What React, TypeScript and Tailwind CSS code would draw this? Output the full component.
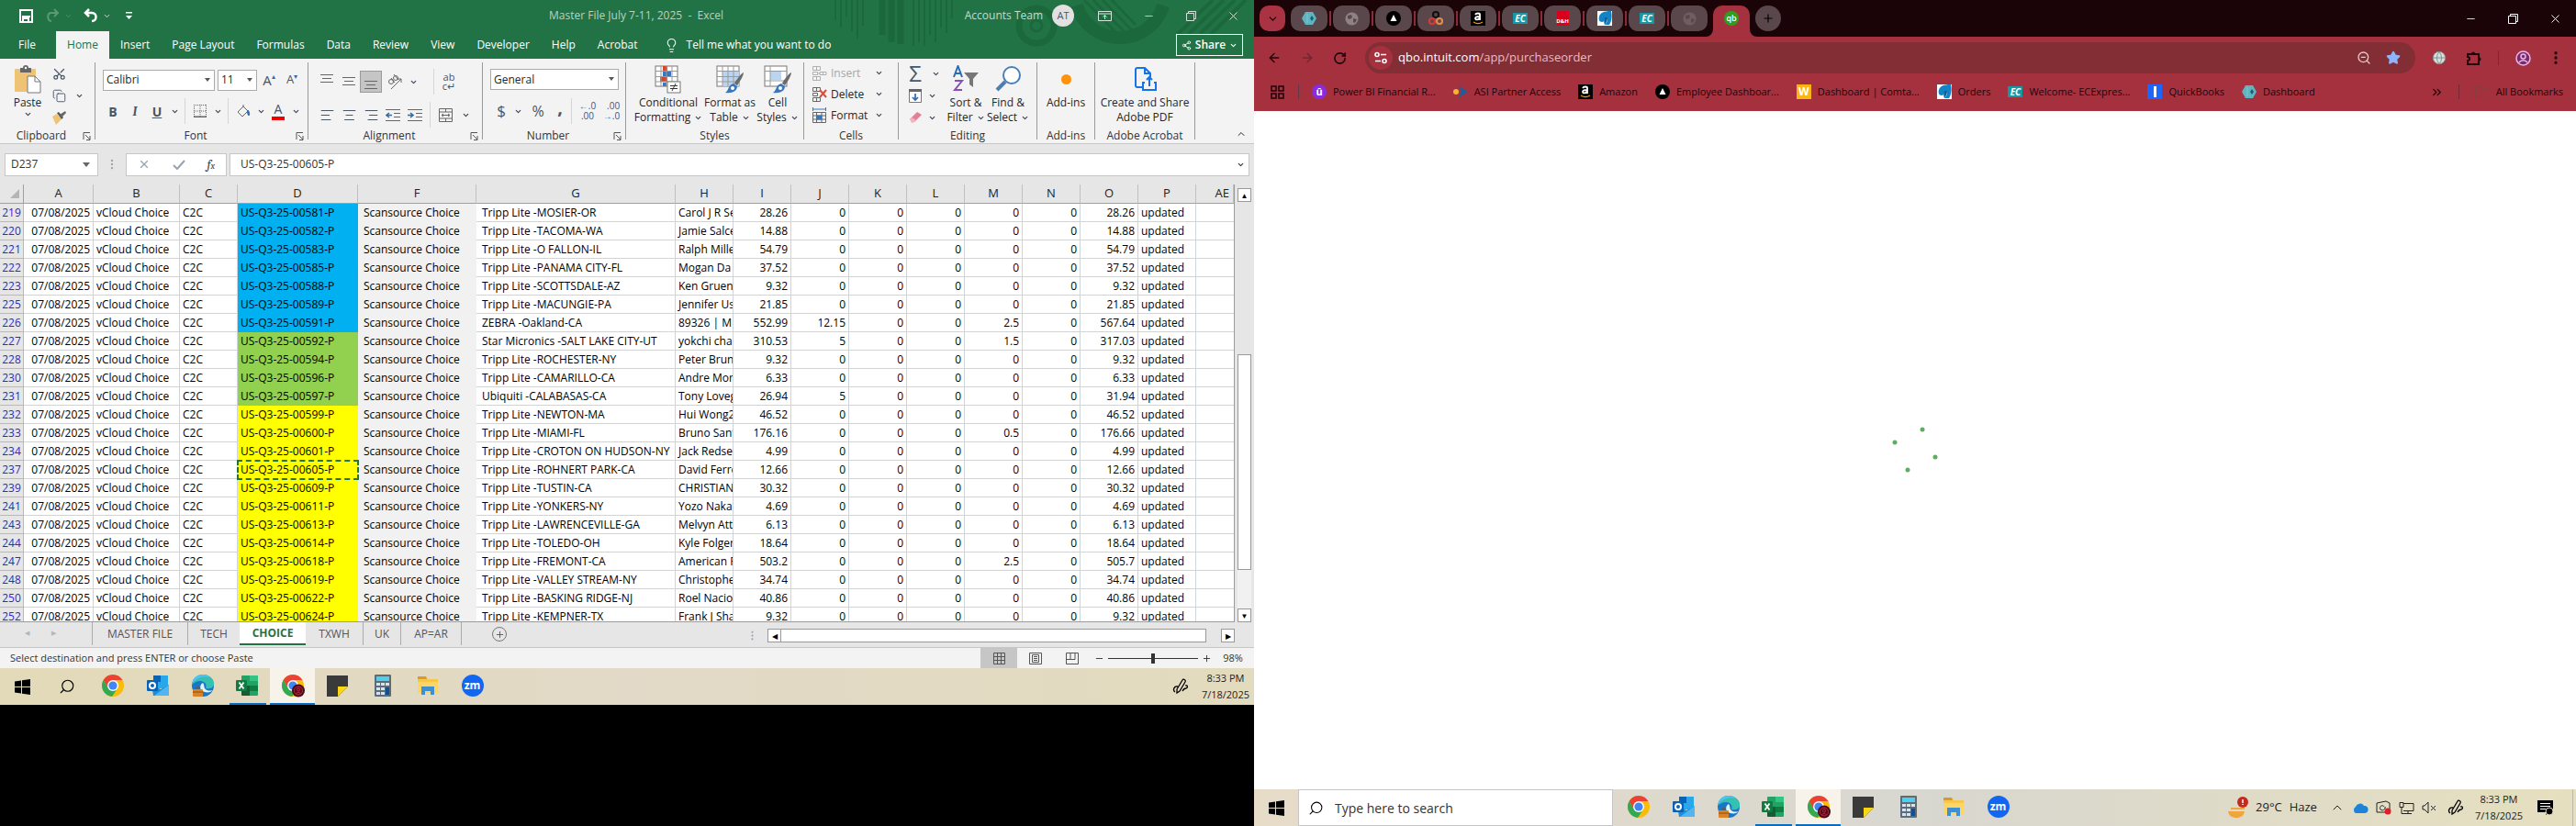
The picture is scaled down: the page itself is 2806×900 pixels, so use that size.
import React, { useState } from 'react';
import {
  AlignCenter, AlignLeft, AlignRight, ArrowLeft, ArrowRight, ChevronDown, ChevronUp, ChevronsRight,
  Copy, Folder, Globe, Lightbulb, Minus, MoreVertical, Plus, RotateCw, Scissors, Search, Share2, Star, X, ZoomOut,
} from 'lucide-react';

type Row = [number, string, string, string, string, string, string, string];

// row number, PO suffix, description, customer, freight, J, M, total
const rows: Row[] = [
  [219, '00581', 'Tripp Lite -MOSIER-OR', 'Carol J R Se', '28.26', '0', '0', '28.26'],
  [220, '00582', 'Tripp Lite -TACOMA-WA', 'Jamie Salce', '14.88', '0', '0', '14.88'],
  [221, '00583', 'Tripp Lite -O FALLON-IL', 'Ralph Mille', '54.79', '0', '0', '54.79'],
  [222, '00585', 'Tripp Lite -PANAMA CITY-FL', 'Mogan Da', '37.52', '0', '0', '37.52'],
  [223, '00588', 'Tripp Lite -SCOTTSDALE-AZ', 'Ken Gruen', '9.32', '0', '0', '9.32'],
  [225, '00589', 'Tripp Lite -MACUNGIE-PA', 'Jennifer Us', '21.85', '0', '0', '21.85'],
  [226, '00591', 'ZEBRA -Oakland-CA', '89326 | M', '552.99', '12.15', '2.5', '567.64'],
  [227, '00592', 'Star Micronics -SALT LAKE CITY-UT', 'yokchi cha', '310.53', '5', '1.5', '317.03'],
  [228, '00594', 'Tripp Lite -ROCHESTER-NY', 'Peter Brun', '9.32', '0', '0', '9.32'],
  [230, '00596', 'Tripp Lite -CAMARILLO-CA', 'Andre Mor', '6.33', '0', '0', '6.33'],
  [231, '00597', 'Ubiquiti -CALABASAS-CA', 'Tony Loveg', '26.94', '5', '0', '31.94'],
  [232, '00599', 'Tripp Lite -NEWTON-MA', 'Hui Wong2', '46.52', '0', '0', '46.52'],
  [233, '00600', 'Tripp Lite -MIAMI-FL', 'Bruno Sant', '176.16', '0', '0.5', '176.66'],
  [234, '00601', 'Tripp Lite -CROTON ON HUDSON-NY', 'Jack Redse', '4.99', '0', '0', '4.99'],
  [237, '00605', 'Tripp Lite -ROHNERT PARK-CA', 'David Ferre', '12.66', '0', '0', '12.66'],
  [239, '00609', 'Tripp Lite -TUSTIN-CA', 'CHRISTIAN', '30.32', '0', '0', '30.32'],
  [241, '00611', 'Tripp Lite -YONKERS-NY', 'Yozo Naka', '4.69', '0', '0', '4.69'],
  [243, '00613', 'Tripp Lite -LAWRENCEVILLE-GA', 'Melvyn Att', '6.13', '0', '0', '6.13'],
  [244, '00614', 'Tripp Lite -TOLEDO-OH', 'Kyle Folger', '18.64', '0', '0', '18.64'],
  [247, '00618', 'Tripp Lite -FREMONT-CA', 'American F', '503.2', '0', '2.5', '505.7'],
  [248, '00619', 'Tripp Lite -VALLEY STREAM-NY', 'Christophe', '34.74', '0', '0', '34.74'],
  [250, '00622', 'Tripp Lite -BASKING RIDGE-NJ', 'Roel Nacio', '40.86', '0', '0', '40.86'],
  [252, '00624', 'Tripp Lite -KEMPNER-TX', 'Frank J Sha', '9.32', '0', '0', '9.32'],
];

const poColor = (n: number) => (n <= 226 ? 'bg-[#00b0f0]' : n <= 231 ? 'bg-[#92d050]' : 'bg-[#ffff00]');

const Chev = () => <ChevronDown size={9} strokeWidth={3} className="shrink-0 text-gray-700" />;

const Tool: React.FC<{ label: string; w?: string; className?: string; children: React.ReactNode }> = ({ label, w = 'w-6', className = '', children }) => (
  <button aria-label={label} className={`flex h-6 shrink-0 items-center justify-center text-gray-600 ${w} ${className}`}>{children}</button>
);

const Launcher = () => (
  <svg width="9" height="9" viewBox="0 0 9 9" fill="none" stroke="#555">
    <path d="M1 8V.5H8M3 3l5 5M8 4v4.500H4" />
  </svg>
);

const Group: React.FC<{ name: string; w: string; launcher?: boolean; children: React.ReactNode }> = ({ name, w, launcher, children }) => (
  <div className={`flex shrink-0 ${w}`}>
    <div className="flex h-[88px] min-w-0 flex-1 flex-col">
      <div className="flex-1">{children}</div>
      <div className="flex h-4 items-center text-[#333]">
        <span className="flex-1 text-center whitespace-nowrap">{name}</span>
        {launcher && <button aria-label={`${name} settings`} className="mr-1"><Launcher /></button>}
      </div>
    </div>
    <div className="h-[84px] w-px bg-[#9a9a9a]" />
  </div>
);

const Sep = () => <div className="mx-1 h-7 w-px shrink-0 bg-[#d5d5d5]" />;

const Picker: React.FC<{ label: string; value: string; w: string }> = ({ label, value, w }) => (
  <div className={`relative h-[23px] border border-[#ababab] bg-white ${w}`}>
    <select aria-label={label} className="h-full w-full appearance-none bg-transparent px-[3px] leading-5 outline-none">
      <option>{value}</option>
    </select>
    <svg className="pointer-events-none absolute top-2 right-1" width="6" height="4"><path d="M0 0h6L3 4z" fill="#555" /></svg>
  </div>
);

const BigButton: React.FC<{ icon: React.ReactNode; lines: [string, string?]; chev?: boolean; w: string }> = ({ icon, lines, chev, w }) => (
  <button className={`flex flex-col items-center whitespace-nowrap ${w}`}>
    <span className="flex h-9 items-center">{icon}</span>
    <span className="leading-4">{lines[0]}</span>
    <span className="flex h-4 items-center gap-1 leading-4">{lines[1]}{chev && <Chev />}</span>
  </button>
);

const PasteIcon = () => (
  <svg width="30" height="31" viewBox="0 0 30 31">
    <rect x="1" y="4" width="23" height="25" rx="1" fill="#eec373" />
    <path d="M7 8V3h3a3 3 0 0 1 6 0h3v5z" fill="#666" />
    <circle cx="13" cy="3" r="1.200" fill="#fff" />
    <path d="M15 12h8l6 6v12H15z" fill="#fff" stroke="#777" />
    <path d="M23 12v6h6" fill="none" stroke="#777" />
  </svg>
);

const BrushIcon = () => (
  <svg width="17" height="16" viewBox="0 0 17 16">
    <path d="M1 7l5-3 5 6-6 6z" fill="#eec373" />
    <path d="M6 3l2-1 5 6-2 2z" fill="#555" />
    <path d="M9 5l6-4 1 2-5 5z" fill="#666" />
  </svg>
);

const GridIcon: React.FC<{ kind: 'cond' | 'table' | 'cell' }> = ({ kind }) => (
  <svg width="32" height="32" viewBox="0 0 32 32" fill="none">
    <rect x="2" y="2" width="24" height="22" fill="#fff" stroke="#777" />
    {kind === 'cond' && <>
      <path d="M10 2h5v5h-5zM7 14h8v5H7z" fill="#d0492f" />
      <path d="M10 7.500h9v6h-9zM10 20h4v4h-4z" fill="#3b76bb" />
    </>}
    {kind === 'table' && <path d="M8 8h18v16H8z" fill="#bcd4ee" />}
    {kind === 'cell' && <path d="M8 8h12v9H8z" fill="#bcd4ee" />}
    <path d={kind === 'cell' ? 'M2 7.500h24M2 18h24M8 2v22' : 'M2 7.500h24M2 13.500h24M2 19h24M8 2v22M14 2v22M20 2v22'} stroke="#999" />
    {kind === 'cond' ? <>
      <rect x="15" y="19" width="14" height="12" fill="#fff" stroke="#777" />
      <path d="M18 23.500h8M18 26.500h8M24 21l-4 8" stroke="#333" />
    </> : <>
      <path d="M31 9c-2 0-9 9-10 12l3 2c3-4 7-11 7-14z" fill="#6b6b6b" />
      <path d="M20 21l4 3c0 5-5 8-13 7 4-2 3-9 9-10z" fill="#3b76bb" />
      <circle cx="19" cy="26" r="2" fill="#fff" />
    </>}
  </svg>
);

const CellsIcon: React.FC<{ kind: string }> = ({ kind }) => (
  <svg width="17" height="18" viewBox="0 0 17 18" fill="none" stroke={kind === 'Insert' ? '#b0b0b0' : '#666'}>
    {kind === 'Format' ? <>
      <path d="M1.500 5.500h14v11h-14zM1.500 9h14M1.500 13h14M5.500 5v12M11 5v12" />
      <path d="M6 9h5v4H6z" fill="#3b76bb" stroke="#3b76bb" />
      <path d="M1.500 2h14M1.500 0v4M15.500 0v4" stroke="#3b76bb" />
    </> : <>
      <path d="M1.500 1.500h8v4h-8zM5.500 1.500v4M1.500 12.500h8v4h-8zM5.500 12.500v4M1.500 7.500h5v3h-5z" />
      {kind === 'Insert'
        ? <path d="M9 7.500h7v3H9zM12.500 7.500v3M6 9h3" />
        : <path d="M9 4l7 8M16 4l-7 8" stroke="#dd4b39" strokeWidth="2" />}
    </>}
  </svg>
);

const TitleArt = () => (
  <svg className="absolute top-0 right-0 h-16 w-[461px]" viewBox="0 0 461 64" fill="none" stroke="#1c683d">
    <path d="M5 0v22M11 0v30M17 0v18M23 0v34M29 0v42M35 0v28" strokeWidth="2" />
    <path d="M56 0v38M66 0v46M76 0v48" strokeWidth="7" />
    <path d="M90 0v50M96 0v46M102 0v50M108 0v38M114 0v46M120 0v30M126 0v36M132 0v20" strokeWidth="2" />
    <circle cx="224" cy="28" r="19" strokeWidth="7" />
    <circle cx="224" cy="28" r="6" strokeWidth="3" />
    <path d="M268 0a49 49 0 0 0 94 0" transform="translate(0 6)" strokeWidth="14" />
    <path d="M276 0l42 43M286 0l36 37M296 0l32 33M306 0l26 27" strokeWidth="3" />
    <path d="M416 0l-38 37M428 0l-38 37M440 0l-38 37M452 0l-38 37" strokeWidth="4" />
  </svg>
);

const WindowsLogo = () => (
  <svg width="17" height="17" viewBox="0 0 17 17" fill="#000">
    <path d="M0 2.500L7 1.500V8H0zM8 1.300L17 0v8H8zM0 9h7v6.500l-7-1zM8 9h9v8l-9-1.300z" />
  </svg>
);

const ChromeLogo: React.FC<{ badge?: boolean }> = ({ badge }) => (
  <svg width="26" height="26" viewBox="0 0 26 26">
    <circle cx="13" cy="13" r="12" fill="#fbbc05" />
    <path d="M2.600 7A12 12 0 0 1 23.400 7H13L8 16z" fill="#ea4335" />
    <path d="M2.600 7A12 12 0 0 0 12 25l6-9-10 0z" fill="#34a853" />
    <circle cx="13" cy="13" r="6" fill="#fff" />
    <circle cx="13" cy="13" r="4.600" fill="#4285f4" />
    {badge && <>
      <circle cx="19" cy="18.500" r="7" fill="#4a0a18" />
      <circle cx="19" cy="18.500" r="4.500" fill="none" stroke="#c02a45" />
      <circle cx="19" cy="17.500" r="1.600" fill="none" stroke="#c02a45" />
      <path d="M16.500 22c1-2 4-2 5 0" fill="none" stroke="#c02a45" />
    </>}
  </svg>
);

const OutlookLogo = () => (
  <svg width="26" height="24" viewBox="0 0 26 24">
    <rect x="8" y="1" width="16" height="14" fill="#28a8ea" />
    <rect x="8" y="1" width="8" height="7" fill="#0364b8" />
    <path d="M6 11l10 5 9-5v12H8z" fill="#1490df" />
    <path d="M25 11L9 23h16z" fill="#50b5f0" />
    <rect x="1" y="6" width="12" height="12" rx="1" fill="#0a62b8" />
    <circle cx="7" cy="12" r="3" fill="none" stroke="#fff" strokeWidth="2" />
  </svg>
);

const EdgeLogo = () => (
  <svg width="26" height="26" viewBox="0 0 26 26">
    <circle cx="13" cy="13" r="12" fill="#1877c9" />
    <path d="M1 12C2 4 8 1 13 1c8 0 13 6 12 11-1 4-5 5-9 4 2-4-1-8-6-8-4 0-7 2-9 4z" fill="#35c1b1" />
    <path d="M1 12C2 4 8 1 13 1c3 0 6 1 8 3-5-2-16-1-20 8z" fill="#4fc3f7" />
    <path d="M13 10c-4 2-4 9 2 10 4 1 7 0 9-2-3 1-7 1-9-2-1-2 0-3-2-6z" fill="#e8f3ee" />
    <rect x="2" y="17" width="11" height="8" rx="1" fill="#d98324" />
    <path d="M2 20h11M6 17v-2h3v2" stroke="#8a4a10" fill="none" />
  </svg>
);

const ExcelLogo = () => (
  <svg width="25" height="24" viewBox="0 0 25 24">
    <rect x="6" y="1" width="18" height="22" rx="1" fill="#21a366" />
    <path d="M15 1h8l1 1v5h-9z" fill="#33c481" />
    <path d="M6 12h9v11H7l-1-1z" fill="#185c37" />
    <path d="M15 12h9v6h-9z" fill="#107c41" />
    <rect x="0" y="6" width="12" height="12" rx="1" fill="#107c41" />
    <path d="M3.500 8.500l5 7M8.500 8.500l-5 7" stroke="#fff" strokeWidth="1.800" />
  </svg>
);

const NotesLogo = () => (
  <svg width="23" height="23" viewBox="0 0 23 23"><path d="M0 0h23v12L12 23H0z" fill="#3a3a3a" /><path d="M12 23V12h11z" fill="#f9d616" /></svg>
);

const CalcLogo = () => (
  <svg width="18" height="24" viewBox="0 0 18 24">
    <rect width="18" height="24" rx="1" fill="#5c6b7a" />
    <rect x="2" y="2" width="14" height="5" fill="#4fd0e8" />
    <path d="M2 9h4v3H2zM7 9h4v3H7zM2 14h4v3H2zM7 14h4v3H7zM2 19h4v3H2zM7 19h4v3H7zM12 9h4v3h-4z" fill="#d8e2ea" />
    <path d="M12 14h4v8h-4z" fill="#0f4f94" />
  </svg>
);

const FolderLogo = () => (
  <svg width="24" height="22" viewBox="0 0 24 22">
    <path d="M1 1h9l2 3h11v15H1z" fill="#f7c64a" />
    <path d="M1 1h9l1 3H1z" fill="#d9992b" />
    <path d="M1 7h22v12H1z" fill="#fbd667" />
    <path d="M5 21v-9h14v9h-4v-4H9v4z" fill="#3f8fd2" />
  </svg>
);

const ZoomLogo = () => (
  <span className="flex size-6 items-center justify-center rounded-full bg-[#1166f2] text-[12px] font-bold text-white">zm</span>
);

const apps = [
  { name: 'Chrome', icon: <ChromeLogo /> },
  { name: 'Outlook', icon: <OutlookLogo /> },
  { name: 'Edge', icon: <EdgeLogo /> },
  { name: 'Excel', icon: <ExcelLogo />, open: true },
  { name: 'Chrome profile', icon: <ChromeLogo badge />, open: true, active: true },
  { name: 'Sticky Notes', icon: <NotesLogo /> },
  { name: 'Calculator', icon: <CalcLogo /> },
  { name: 'File Explorer', icon: <FolderLogo /> },
  { name: 'Zoom', icon: <ZoomLogo /> },
];

const TaskApps = () => (
  <div className="flex h-full">
    {apps.map(a => (
      <button key={a.name} aria-label={a.name} className={`flex h-full w-[49px] flex-col items-center ${a.active ? 'bg-[#f7f3ea]' : ''}`}>
        <span className="flex flex-1 items-center">{a.icon}</span>
        <span className={`h-[2px] ${a.active ? 'w-full' : 'w-10'} ${a.open ? 'bg-[#0a6cbd]' : ''}`} />
      </button>
    ))}
  </div>
);

const PenIcon = () => (
  <svg width="18" height="18" viewBox="0 0 18 18" fill="none" stroke="#000" strokeWidth="1.300">
    <path d="M5 12L11 2c1-2 4 0 3 2L8 14l-3 2zM6 9c-4-1-6 4-3 6M14 8c3-1 3 2 1 3-2 0-3 1-4 3" />
  </svg>
);

const Clock = () => (
  <div className="flex flex-col items-center text-[11px] leading-[18px] text-[#222]">
    <span>8:33 PM</span>
    <span>7/18/2025</span>
  </div>
);

const menuTabs = ['Insert', 'Page Layout', 'Formulas', 'Data', 'Review', 'View', 'Developer', 'Help', 'Acrobat'];

const TitleBar = () => (
  <header className="relative h-16 bg-[#217346] text-white">
    <TitleArt />
    <div className="relative flex h-[34px] items-center whitespace-nowrap">
      <div className="flex flex-1 items-center gap-2 pl-5">
        <button aria-label="Save">
          <svg width="17" height="17" viewBox="0 0 17 17" fill="none" stroke="#fff" strokeWidth="2"><path d="M2 2h13v13H2zM4 9h9M5 15v-4h6v4" /></svg>
        </button>
        <button aria-label="Redo" className="ml-1 flex items-center gap-1 text-[#5c9a76]">
          <svg width="17" height="16" viewBox="0 0 17 16" fill="none" stroke="currentColor" strokeWidth="2"><path d="M10 1l4 4-4 4M14 5H7c-5 0-5 8 0 9" /></svg>
          <ChevronDown size={9} />
        </button>
        <button aria-label="Undo" className="ml-1 flex items-center gap-1">
          <svg width="17" height="16" viewBox="0 0 17 16" fill="none" stroke="currentColor" strokeWidth="2.500"><path d="M6 1L2 5l4 4M2 5h7c6 0 6 9 0 9" /></svg>
          <ChevronDown size={9} />
        </button>
        <button aria-label="Customize quick access" className="ml-2">
          <svg width="7" height="8" viewBox="0 0 7 8" fill="#fff"><path d="M0 0h7v1.500H0zM0 4h7L3.500 8z" /></svg>
        </button>
      </div>
      <h1 className="text-center text-[12px] text-[#b5d3c0]">Master File July 7-11, 2025 &nbsp;-&nbsp; Excel</h1>
      <div className="flex flex-1 items-center justify-end text-[#d3e5da]">
        <span className="text-[12px] text-[#c3dccd]">Accounts Team</span>
        <span className="mr-[14px] ml-[10px] flex size-6 items-center justify-center rounded-full bg-[#e4dfe0] text-[11px] text-gray-600">AT</span>
        <button aria-label="Ribbon display options" className="flex w-11 pl-3">
          <svg width="15" height="11" viewBox="0 0 15 11" fill="none" stroke="currentColor"><path d="M.5.500h14v10H.500zM.500 3h14M7.500 9V5M5.500 6.500l2-2 2 2" /></svg>
        </button>
        <button aria-label="Minimize" className="flex w-[46px] justify-center"><Minus size={13} strokeWidth={1.500} /></button>
        <button aria-label="Restore" className="flex w-[46px] justify-center"><Restore /></button>
        <button aria-label="Close" className="flex w-[46px] justify-center"><X size={15} strokeWidth={1.500} /></button>
      </div>
    </div>
    <nav className="relative flex h-[30px] items-center text-[12px]">
      <button className="h-full w-[61px] pr-3 pl-5 text-left">File</button>
      <button className="h-full w-[58px] bg-[#f3f3f3] text-[#217346]">Home</button>
      {menuTabs.map(t => <button key={t} className="h-full px-3 whitespace-nowrap">{t}</button>)}
      <button className="ml-4 flex items-center gap-2 whitespace-nowrap"><Lightbulb size={17} strokeWidth={1.500} />Tell me what you want to do</button>
      <button className="mr-3 ml-auto flex h-6 w-[73px] items-center justify-center gap-1 border border-white font-semibold"><Share2 size={11} />Share<ChevronDown size={9} strokeWidth={3} /></button>
    </nav>
  </header>
);

const Restore = () => (
  <svg width="11" height="11" viewBox="0 0 11 11" fill="none" stroke="currentColor"><path d="M.5 2.500h8v8h-8zM2.500 2.500v-2h8v8h-2" /></svg>
);

const Indent: React.FC<{ out?: boolean }> = ({ out }) => (
  <svg width="16" height="13" viewBox="0 0 16 13" fill="none" stroke="#666">
    <path d="M0 .500h16M9 4.500h7M9 8.500h7M0 12.500h16" />
    <path d={out ? 'M7 6.500H1M4 4L1 6.500 4 9' : 'M0 6.500h6M3 4l3 2.500L3 9'} stroke="#2b6cb5" strokeWidth="1.600" />
  </svg>
);

const VAlign: React.FC<{ y: number }> = ({ y }) => (
  <svg width="14" height="18" viewBox="0 0 14 18" stroke="#666"><path d={`M0 ${y}.500h14M2 ${y + 4}.500h10M0 ${y + 8}.500h14`} /></svg>
);

const Ribbon = () => (
  <div className="flex h-[93px] border-b border-[#c8c8c8] bg-[#f3f3f3] pt-1 text-[12px] text-[#262626]">
    <Group name="Clipboard" w="w-[104px]" launcher>
      <div className="flex">
        <button className="ml-3 flex w-9 flex-col items-center">
          <span className="flex h-9 items-center"><PasteIcon /></span>
          <span className="leading-4">Paste</span>
          <Chev />
        </button>
        <div className="ml-1 flex flex-col">
          <Tool label="Cut"><Scissors size={15} className="-rotate-90" /></Tool>
          <div className="flex"><Tool label="Copy"><Copy size={15} strokeWidth={1.500} /></Tool><Tool label="Copy options" w="w-5"><Chev /></Tool></div>
          <Tool label="Format painter"><BrushIcon /></Tool>
        </div>
      </div>
    </Group>

    <Group name="Font" w="w-[232px]" launcher>
      <div className="flex items-center pt-[7px] pl-2">
        <Picker label="Font" value="Calibri" w="mr-[3px] w-[122px]" />
        <Picker label="Font size" value="11" w="w-[43px]" />
        <Tool label="Grow font" w="w-[26px]"><span className="text-[15px]">A</span><span className="mb-2 text-[8px] text-[#2b6cb5]">▴</span></Tool>
        <Tool label="Shrink font" w="w-6"><span className="text-[13px]">A</span><span className="mb-2 text-[8px] text-[#2b6cb5]">▾</span></Tool>
      </div>
      <div className="mt-2 flex items-center pl-[7px] text-[14px]">
        <Tool label="Bold" className="font-bold">B</Tool>
        <Tool label="Italic" className="font-serif font-bold italic">I</Tool>
        <Tool label="Underline" className="font-bold underline">U</Tool>
        <Tool label="Underline options" w="w-[14px]"><Chev /></Tool>
        <Sep />
        <Tool label="Borders">
          <svg width="14" height="14" viewBox="0 0 14 14" fill="none" stroke="#666"><path d="M.5 0v13M7 0v13M13.500 0v13M0 .500h14M0 7h14" strokeDasharray="1 1" /><path d="M0 13.500h14" strokeWidth="2" /></svg>
        </Tool>
        <Tool label="Border options" w="w-[14px]"><Chev /></Tool>
        <Sep />
        <Tool label="Fill color">
          <svg width="16" height="15" viewBox="0 0 16 15" fill="none" stroke="#666"><path d="M2 8l6-6 5 5-6 6zM8 2V0" /><path d="M13 6c2 2 2 5 1 6-1-1-2-3-1-6z" fill="#2b6cb5" stroke="#2b6cb5" /></svg>
        </Tool>
        <Tool label="Fill options" w="w-[14px]"><Chev /></Tool>
        <Tool label="Font color"><span className="border-b-4 border-[#e00] px-[3px] leading-4">A</span></Tool>
        <Tool label="Font color options" w="w-[14px]"><Chev /></Tool>
      </div>
    </Group>

    <Group name="Alignment" w="w-[190px]" launcher>
      <div className="flex items-center pt-[7px] pl-2">
        <Tool label="Top align"><VAlign y={1} /></Tool>
        <Tool label="Middle align"><VAlign y={4} /></Tool>
        <Tool label="Bottom align" className="border border-[#9a9a9a] bg-[#c5c5c5]"><VAlign y={8} /></Tool>
        <Tool label="Orientation" w="w-7">
          <svg width="17" height="17" viewBox="0 0 17 17" fill="none" stroke="#666"><path d="M4 16L15 5M15 9V5h-4" /><circle cx="4" cy="8" r="2.500" /><circle cx="9" cy="4" r="2.500" /><path d="M4 4l4 5M7 0l5 6" /></svg>
        </Tool>
        <Tool label="Orientation options" w="w-3"><Chev /></Tool>
        <div className="ml-3"><Sep /></div>
        <Tool label="Wrap text"><span className="text-[11px] leading-[10px]">ab<br />c↵</span></Tool>
      </div>
      <div className="mt-2 flex items-center pl-2">
        <Tool label="Align left"><AlignLeft size={17} strokeWidth={1.500} /></Tool>
        <Tool label="Center"><AlignCenter size={17} strokeWidth={1.500} /></Tool>
        <Tool label="Align right"><AlignRight size={17} strokeWidth={1.500} /></Tool>
        <Tool label="Decrease indent"><Indent out /></Tool>
        <Tool label="Increase indent"><Indent /></Tool>
        <Sep />
        <Tool label="Merge and center">
          <svg width="15" height="15" viewBox="0 0 15 15" fill="none" stroke="#666"><path d="M.5.500h14v14H.500zM.500 4h14M.500 11h14M7.500.500V4M7.500 11v3.500M3 7.500h9M5 6L3 7.500 5 9M10 6l2 1.500L10 9" /></svg>
        </Tool>
        <Tool label="Merge options" w="w-5"><Chev /></Tool>
      </div>
    </Group>

    <Group name="Number" w="w-[156px]" launcher>
      <div className="flex pt-[7px] pl-2"><Picker label="Number format" value="General" w="w-[140px]" /></div>
      <div className="mt-[9px] flex items-center pl-2">
        <Tool label="Accounting format" className="text-[17px]">$</Tool>
        <Tool label="Accounting options" w="w-3"><Chev /></Tool>
        <Tool label="Percent" w="w-8" className="text-[16px]">%</Tool>
        <Tool label="Comma" w="w-4" className="pb-2 text-[20px] font-bold">,</Tool>
        <Sep />
        <Tool label="Increase decimal" w="w-[26px]" className="text-[10px]"><span className="leading-[11px] whitespace-nowrap"><span className="font-bold text-[#2b6cb5]">←</span>.0<br />.00</span></Tool>
        <Tool label="Decrease decimal" w="w-[26px]" className="text-[10px]"><span className="text-right leading-[11px] whitespace-nowrap">.00<br /><span className="font-bold text-[#2b6cb5]">→</span>.0</span></Tool>
      </div>
    </Group>

    <Group name="Styles" w="w-[194px]">
      <div className="flex pl-2">
        <BigButton icon={<GridIcon kind="cond" />} lines={['Conditional', 'Formatting']} chev w="w-[76px]" />
        <BigButton icon={<GridIcon kind="table" />} lines={['Format as', 'Table']} chev w="w-[58px]" />
        <BigButton icon={<GridIcon kind="cell" />} lines={['Cell', 'Styles']} chev w="w-[46px]" />
      </div>
    </Group>

    <Group name="Cells" w="w-[103px]">
      {['Insert', 'Delete', 'Format'].map(k => (
        <button key={k} className={`ml-2 flex h-[23px] items-center gap-1 ${k === 'Insert' ? 'text-[#a6a6a6]' : ''}`}>
          <CellsIcon kind={k} /><span className="w-11 text-left">{k}</span><Chev />
        </button>
      ))}
    </Group>

    <Group name="Editing" w="w-[151px]">
      <div className="flex">
        <div className="flex w-[50px] flex-col pl-[6px]">
          <div className="flex"><Tool label="AutoSum" className="text-[24px]">Σ</Tool><Tool label="AutoSum options" w="w-5"><Chev /></Tool></div>
          <div className="flex">
            <Tool label="Fill"><svg width="14" height="15" viewBox="0 0 14 15" fill="none"><path d="M.5.500h13v14H.500z" fill="#fff" stroke="#777" /><path d="M0 0h14v3H0z" fill="#666" /><path d="M7 5v7M4 9l3 3 3-3" stroke="#2b6cb5" strokeWidth="1.700" /></svg></Tool>
            <Tool label="Fill options" w="w-3"><Chev /></Tool>
          </div>
          <div className="flex">
            <Tool label="Clear"><svg width="14" height="12" viewBox="0 0 14 12"><path d="M1 8l8-8 5 3-8 8z" fill="#e57f97" /><path d="M1 8l2-2 5 3-2 2-3 1z" fill="#f3b2c0" /></svg></Tool>
            <Tool label="Clear options" w="w-3"><Chev /></Tool>
          </div>
        </div>
        <BigButton
          icon={<svg width="30" height="30" viewBox="0 0 30 30" fill="none"><path d="M2 13L6.500 1 11 13M3.500 9h6" stroke="#2b6cb5" strokeWidth="2" /><path d="M3 17h8L3 27h8" stroke="#8a4fb5" strokeWidth="2" /><path d="M13 8h16l-6 7v9l-4-3v-6z" fill="#777" /></svg>}
          lines={['Sort &', 'Filter']} chev w="w-[46px]"
        />
        <BigButton
          icon={<svg width="30" height="30" viewBox="0 0 30 30" fill="none"><circle cx="19" cy="11" r="9" fill="#fff" stroke="#4a7fb5" strokeWidth="2" /><path d="M12 18L3 27" stroke="#4a7fb5" strokeWidth="4" /></svg>}
          lines={['Find &', 'Select']} chev w="w-[46px]"
        />
      </div>
    </Group>

    <Group name="Add-ins" w="w-[63px]">
      <BigButton icon={<span className="size-[11px] rounded-full bg-[#ff930f]" />} lines={['Add-ins']} w="w-full" />
    </Group>

    <Group name="Adobe Acrobat" w="w-[109px]">
      <BigButton
        icon={<svg width="25" height="28" viewBox="0 0 25 28" fill="none" stroke="#1473e6" strokeWidth="2"><path d="M9 23H4a2 2 0 0 1-2-2V4a2 2 0 0 1 2-2h8l6 6v4M12 2v6h6M12 18h-2v8h14v-8h-2M17 22v-9M14 15l3-3 3 3" /></svg>}
        lines={['Create and Share', 'Adobe PDF']} w="w-full"
      />
    </Group>
    <button aria-label="Collapse ribbon" className="mr-2 mb-1 ml-auto self-end"><ChevronUp size={12} /></button>
  </div>
);

const FormulaBar = () => {
  const [value, setValue] = useState('US-Q3-25-00605-P');
  return (
    <div className="flex h-11 items-center bg-[#e6e6e6] px-[5px] text-[12px] text-[#333]">
      <div className="flex h-[25px] w-[102px] items-center border border-[#c6c6c6] bg-white">
        <input aria-label="Name box" defaultValue="D237" className="w-full min-w-0 bg-transparent px-[6px] outline-none" />
        <svg width="16" height="5" className="mr-1 shrink-0"><path d="M4 0h8L8 5z" fill="#666" /></svg>
      </div>
      <div className="flex w-[30px] justify-center"><MoreVertical size={14} className="text-gray-400" /></div>
      <div className="flex h-[25px] w-[110px] items-center justify-around border border-[#c6c6c6] bg-white text-gray-400">
        <button aria-label="Cancel"><X size={14} /></button>
        <button aria-label="Enter"><svg width="14" height="11" viewBox="0 0 14 11" fill="none" stroke="currentColor" strokeWidth="2"><path d="M1 6l4 4 8-9" /></svg></button>
        <button className="font-serif text-[14px] text-gray-700 italic">f<span className="text-[10px]">x</span></button>
      </div>
      <div className="ml-[3px] flex h-[25px] flex-1 items-center border border-[#c6c6c6] bg-white">
        <input aria-label="Formula" value={value} onChange={e => setValue(e.target.value)} className="flex-1 bg-transparent px-[11px] outline-none" />
        <button aria-label="Expand formula bar" className="mr-1"><ChevronDown size={9} strokeWidth={3} /></button>
      </div>
    </div>
  );
};

const cols = [
  ['A', 'w-[76px]'], ['B', 'w-[94px]'], ['C', 'w-[63px]'], ['D', 'w-[131px]'], ['F', 'w-[129px]'], ['G', ''],
  ['H', 'w-[63px]'], ['I', 'w-[63px]'], ['J', 'w-[63px]'], ['K', 'w-[63px]'], ['L', 'w-[63px]'], ['M', 'w-[63px]'],
  ['N', 'w-[63px]'], ['O', 'w-[63px]'], ['P', 'w-[63px]'], ['AE', 'w-[41px]'],
];

const cell = 'h-5 border-r border-b border-[#cfd3da] px-[3px] py-0 leading-[19px] whitespace-nowrap';

const Sheet = () => (
  <div className="flex h-[477px] bg-[#e6e6e6]">
    <div className="min-w-0 flex-1 overflow-hidden border-r border-b border-[#9b9b9b]">
      <table className="w-full table-fixed border-separate border-spacing-0 bg-white text-[12px] text-black">
        <thead>
          <tr className="bg-[#e6e6e6] text-[13px] text-[#222]">
            <th className="h-[21px] w-[26px] border-r border-b border-[#a0a0a0] p-0">
              <svg width="10" height="10" className="mr-1 ml-auto"><path d="M10 0v10H0z" fill="#b5b5b5" /></svg>
            </th>
            {cols.map(([c, w]) => (
              <th key={c} className={`h-[21px] border-r border-b border-r-[#c0c0c0] border-b-[#a0a0a0] p-0 font-normal ${w} ${c === 'AE' ? 'pr-1 text-right' : ''}`}>{c}</th>
            ))}
          </tr>
        </thead>
        <tbody>
          {rows.map(([n, po, desc, who, freight, j, m, total]) => (
            <tr key={n}>
              <th className="h-5 border-r border-b border-[#b9b9b9] bg-[#e6e6e6] p-0 text-center font-normal text-[#2b27d6]">{n}</th>
              <td className={`${cell} text-right`}>07/08/2025</td>
              <td className={cell}>vCloud Choice</td>
              <td className={cell}>C2C</td>
              <td className={`h-5 px-[3px] py-0 leading-[18px] whitespace-nowrap ${poColor(n)} ${n === 237 ? 'outline-2 -outline-offset-1 outline-dashed outline-[#217346]' : ''}`}>US-Q3-25-{po}-P</td>
              <td className="h-5 bg-[#f1f1f1] px-[6px] py-0 whitespace-nowrap">Scansource Choice</td>
              <td className={`${cell} pl-[6px]`}>{desc}</td>
              <td className={`${cell} overflow-hidden`}>{who}</td>
              <td className={`${cell} text-right`}>{freight}</td>
              <td className={`${cell} text-right`}>{j}</td>
              <td className={`${cell} text-right`}>0</td>
              <td className={`${cell} text-right`}>0</td>
              <td className={`${cell} text-right`}>{m}</td>
              <td className={`${cell} text-right`}>0</td>
              <td className={`${cell} text-right`}>{total}</td>
              <td className={cell}>updated</td>
              <td className="h-5 border-b border-[#cfd3da] p-0" />
            </tr>
          ))}
        </tbody>
      </table>
    </div>
    <div className="flex w-[21px] flex-col items-center pt-1">
      <button aria-label="Scroll up" className="flex h-[15px] w-[15px] items-center justify-center border border-[#999] bg-white text-[8px]">▲</button>
      <div className="h-[166px]" />
      <div className="h-[235px] w-[15px] border border-[#999] bg-white" />
      <div className="w-[15px] flex-1 bg-[#f1f1f1]" />
      <button aria-label="Scroll down" className="flex h-[15px] w-[15px] items-center justify-center border border-[#999] bg-white text-[8px]">▼</button>
    </div>
  </div>
);

const SheetTabs = () => (
  <div className="flex h-7 items-start border-b border-[#c6c6c6] bg-[#e6e6e6] text-[12px] text-[#555]">
    <div className="flex h-[25px] w-[101px] items-center gap-6 border-r border-[#ababab] pl-[27px] text-[7px] text-[#b5b5b5]"><span>◀</span><span>▶</span></div>
    <button className="h-[25px] w-[104px] border-r border-[#ababab]">MASTER FILE</button>
    <button className="h-[25px] w-14">TECH</button>
    <button className="h-[25px] w-[72px] border-b-2 border-[#217346] bg-white font-bold text-[#217346]">CHOICE</button>
    <button className="h-[25px] w-[63px] border-r border-[#ababab]">TXWH</button>
    <button className="h-[25px] w-[41px] border-r border-[#ababab]">UK</button>
    <button className="h-[25px] w-[66px] border-r border-[#ababab]">AP=AR</button>
    <button aria-label="New sheet" className="mt-[5px] ml-[33px] flex size-4 items-center justify-center rounded-full border border-[#777]"><Plus size={11} /></button>
    <div className="mt-[7px] ml-auto flex h-[15px] items-center">
      <MoreVertical size={13} className="mr-[10px] text-gray-400" />
      <button aria-label="Scroll left" className="flex size-[15px] items-center justify-center border border-[#999] bg-white text-[8px] text-black">◀</button>
      <div className="h-[15px] w-[463px] border border-l-0 border-[#999] bg-white" />
      <button aria-label="Scroll right" className="mr-[21px] ml-4 flex size-[15px] items-center justify-center border border-[#999] bg-white text-[8px] text-black">▶</button>
    </div>
  </div>
);

const StatusBar = () => (
  <div className="flex h-[22px] items-center bg-[#f3f3f3] pl-[11px] text-[11px] text-[#333]">
    <span className="flex-1">Select destination and press ENTER or choose Paste</span>
    <button aria-label="Normal view" className="flex h-full w-10 items-center justify-center bg-[#c6c6c6]">
      <svg width="13" height="13" viewBox="0 0 13 13" fill="none" stroke="#555"><path d="M.5.500h12v12H.500zM.500 4.500h12M.500 8.500h12M4.500.500v12M8.500.500v12" /></svg>
    </button>
    <button aria-label="Page layout view" className="flex w-10 justify-center">
      <svg width="14" height="13" viewBox="0 0 14 13" fill="none" stroke="#555"><path d="M.5.500h13v12H.500zM3.500 2.500h7v8h-7zM5 4.500h4M5 6.500h4M5 8.500h4" /></svg>
    </button>
    <button aria-label="Page break view" className="flex w-10 justify-center">
      <svg width="14" height="13" viewBox="0 0 14 13" fill="none" stroke="#555"><path d="M.5.500h13v12H.500zM5 .500v7M10 .500v7M.500 7.500H10" /></svg>
    </button>
    <button aria-label="Zoom out" className="ml-1"><Minus size={11} /></button>
    <input
      aria-label="Zoom" type="range" min={10} max={186} defaultValue={98}
      className="mx-1 h-px w-[98px] appearance-none bg-[#333] [&::-webkit-slider-thumb]:h-[11px] [&::-webkit-slider-thumb]:w-1 [&::-webkit-slider-thumb]:appearance-none [&::-webkit-slider-thumb]:bg-[#333]"
    />
    <button aria-label="Zoom in"><Plus size={11} /></button>
    <span className="w-[46px] text-center text-[11px]">98%</span>
  </div>
);

const ExcelDesktop = () => (
  <section className="flex min-w-0 flex-col bg-black font-['Open_Sans',sans-serif]">
    <TitleBar />
    <Ribbon />
    <FormulaBar />
    <Sheet />
    <SheetTabs />
    <StatusBar />
    <footer className="flex h-10 items-center bg-linear-to-r from-[#e2dab8] via-[#e2d9c8] to-[#e3dbbd]">
      <button aria-label="Start" className="flex w-12 justify-center"><WindowsLogo /></button>
      <button aria-label="Search" className="flex w-[50px] justify-center"><Search size={18} strokeWidth={1.500} className="-scale-x-100" /></button>
      <TaskApps />
      <div className="ml-auto flex items-center gap-[14px] pr-[5px]"><PenIcon /><Clock /></div>
    </footer>
  </section>
);

const AmazonIcon = () => (
  <svg width="16" height="16" viewBox="0 0 16 16" fill="none"><rect width="16" height="16" fill="#000" /><path d="M5 4c1-2 5-2 5 0v6M10 6C6 6 5 7 5 8c0 2 4 2 5-1" stroke="#fff" strokeWidth="1.800" /><path d="M3 12c3 2 7 2 10 0" stroke="#f90" strokeWidth="1.200" /></svg>
);
const EcIcon = () => <span className="flex h-3 w-4 items-center justify-center bg-[#1797a3] text-[10px] leading-3 font-bold text-white italic">EC</span>;
const HexIcon = () => (
  <svg width="16" height="16" viewBox="0 0 16 16"><path d="M4 1h8l4 7-4 7H4L0 8z" fill="#5fb4c0" /><path d="M11 5L9 8l2 3 2-3z" fill="#185f78" /><path d="M6 3v10" stroke="#7cc8d2" /></svg>
);
const AsiTriangle = () => (
  <svg width="16" height="16" viewBox="0 0 16 16"><circle cx="8" cy="8" r="8" fill="#000" /><path d="M8 4l3.500 7h-7z" fill="#fff" /></svg>
);
const GIcon = () => (
  <svg width="16" height="16" viewBox="0 0 16 16"><rect width="16" height="16" fill="#fff" /><path d="M15 0c1 4 1 11-2 15H8c2-2 3-4 3-7H8c0 2-1 4-3 4-3 0-4-3-3-6C3 2 7 0 15 0z" fill="#1283c4" /><path d="M8 7h3c0 3-1 5-3 8-1-2-1-5 0-8z" fill="#0b5f9a" /></svg>
);
const GlobeIcon = () => (
  <svg width="15" height="15" viewBox="0 0 15 15"><circle cx="7.500" cy="7.500" r="7" fill="#8d8285" /><path d="M3 4l4-1 1 3-3 2-2-1zM9 7l4 1-2 4-2-1z" fill="#5a474b" /></svg>
);
const RingsIcon = () => (
  <svg width="16" height="16" viewBox="0 0 16 16" fill="none" strokeWidth="2.200"><circle cx="8" cy="4" r="3" stroke="#111" /><circle cx="4" cy="11" r="3" stroke="#d33a3a" /><circle cx="12" cy="11" r="3" stroke="#e08a4a" /></svg>
);

const chromeTabs = [
  { id: 'dash', icon: <HexIcon /> },
  { id: 'blank', icon: <GlobeIcon /> },
  { id: 'asi', icon: <AsiTriangle /> },
  { id: 'rings', icon: <RingsIcon /> },
  { id: 'amazon', icon: <AmazonIcon /> },
  { id: 'ec', icon: <EcIcon /> },
  { id: 'dh', icon: <span className="flex h-4 w-[13px] items-end justify-center bg-[#d8001c] text-[6px] font-bold text-white">D&amp;H</span> },
  { id: 'orders', icon: <GIcon /> },
  { id: 'ec2', icon: <EcIcon /> },
  { id: 'blank2', icon: <span className="opacity-40"><GlobeIcon /></span> },
];

const bookmarks = [
  { name: 'Power BI Financial R...', icon: <span className="flex size-4 items-center justify-center rounded-full bg-[#8a2be2] text-[11px] font-bold text-white">û</span> },
  { name: 'ASI Partner Access', icon: <svg width="16" height="16" viewBox="0 0 16 16"><path d="M5 1l11 7-11 7 4-7z" fill="#1f5c99" /><circle cx="3" cy="8" r="3" fill="#f5b335" /></svg> },
  { name: 'Amazon', icon: <AmazonIcon /> },
  { name: 'Employee Dashboar...', icon: <AsiTriangle /> },
  { name: 'Dashboard | Comta...', icon: <span className="flex size-4 items-center justify-center bg-[#fbb615] text-[12px] font-bold text-white">W</span> },
  { name: 'Orders', icon: <GIcon /> },
  { name: 'Welcome- ECExpres...', icon: <EcIcon /> },
  { name: 'QuickBooks', icon: <span className="flex size-4 items-center justify-center bg-[#1a66ff]"><span className="h-3 w-[3px] bg-white" /></span> },
  { name: 'Dashboard', icon: <HexIcon /> },
];

const ChromeDesktop = () => (
  <section className="flex min-h-screen min-w-0 flex-col bg-white font-['Open_Sans',sans-serif]">
    <div className="flex h-10 items-center bg-[#1b0407] pl-[6px]">
      <button aria-label="Search tabs" className="mr-[6px] flex h-7 w-7 items-center justify-center rounded-[10px] bg-[#a93243]"><ChevronDown size={13} /></button>
      {chromeTabs.map((t, i) => (
        <React.Fragment key={t.id}>
          <button aria-label={t.id} className="flex h-7 w-10 items-center justify-center rounded-[10px] bg-[#5a474b]">{t.icon}</button>
          {i < chromeTabs.length - 1 && <span className="mx-[2px] h-4 w-[2px] bg-[#8f2a38]" />}
        </React.Fragment>
      ))}
      <button aria-label="QuickBooks" className="relative mt-[6px] ml-[6px] flex h-[34px] w-10 justify-center rounded-t-[10px] bg-[#a5313f] pt-[6px]">
        <svg className="absolute bottom-0 -left-2" width="8" height="8"><path d="M8 0v8H0a8 8 0 0 0 8-8z" fill="#a5313f" /></svg>
        <svg className="absolute -right-2 bottom-0" width="8" height="8"><path d="M0 0v8h8a8 8 0 0 1-8-8z" fill="#a5313f" /></svg>
        <span className="flex size-4 items-center justify-center rounded-full bg-[#2ca01c] text-[9px] leading-3 font-semibold text-white">qb</span>
      </button>
      <button aria-label="New tab" className="ml-[6px] flex size-7 items-center justify-center rounded-full bg-[#5a474b]"><Plus size={14} /></button>
      <div className="ml-auto flex text-white">
        <button aria-label="Minimize" className="flex h-10 w-[46px] items-center justify-center"><Minus size={13} strokeWidth={1.500} /></button>
        <button aria-label="Restore" className="flex h-10 w-[46px] items-center justify-center"><Restore /></button>
        <button aria-label="Close" className="flex h-10 w-[46px] items-center justify-center"><X size={15} strokeWidth={1.500} /></button>
      </div>
    </div>

    <div className="flex h-[81px] flex-col bg-[#a5313f] pt-[6px] text-[#1f0509]">
      <div className="flex h-[34px] items-center">
        <button aria-label="Back" className="ml-[14px] w-9"><ArrowLeft size={16} /></button>
        <button aria-label="Forward" className="w-9 text-[#732430]"><ArrowRight size={16} /></button>
        <button aria-label="Reload" className="w-[35px]"><RotateCw size={15} strokeWidth={2.500} /></button>
        <div className="flex h-[34px] flex-1 items-center rounded-full bg-[#832d34] pr-4 pl-1">
          <button aria-label="Site information" className="flex size-[26px] items-center justify-center rounded-full bg-[#a5313f]">
            <svg width="14" height="14" viewBox="0 0 14 14" fill="none" stroke="#fff" strokeWidth="1.600"><circle cx="3" cy="3.500" r="2" /><path d="M7 3.500h6M1 10.500h6" /><circle cx="11" cy="10.500" r="2" /></svg>
          </button>
          <a href="#purchaseorder" className="ml-[6px] flex-1 text-[13px] text-[#e6bcc0]"><span className="text-white">qbo.intuit.com</span>/app/purchaseorder</a>
          <ZoomOut size={16} className="mr-4 text-[#e8c9cc]" />
          <Star size={16} className="text-[#8fb4ff]" fill="#8fb4ff" />
        </div>
        <button aria-label="Web extension" className="ml-[18px]"><Globe size={16} fill="#d8e0dc" className="text-[#7f9490]" strokeWidth={1.500} /></button>
        <button aria-label="Extensions" className="ml-[21px]">
          <svg width="17" height="17" viewBox="0 0 17 17" fill="none" stroke="currentColor" strokeWidth="2"><path d="M2 4h12v11H2v-4a2 2 0 0 0 0-4z" /><path d="M6 4a2 2 0 0 1 4 0zM14 7.500a2 2 0 0 1 0 4z" fill="currentColor" strokeWidth="1" /></svg>
        </button>
        <span className="mx-[18px] h-4 w-px bg-[#7c2733]" />
        <button aria-label="Profile">
          <svg width="17" height="17" viewBox="0 0 17 17" fill="none" stroke="#e6b7ee" strokeWidth="1.500"><circle cx="8.500" cy="8.500" r="7.500" fill="#7a2b66" /><circle cx="8.500" cy="6.500" r="2.500" /><path d="M4 13c2-3 7-3 9 0" /></svg>
        </button>
        <button aria-label="Menu" className="mr-[13px] ml-[18px]"><MoreVertical size={18} strokeWidth={2.500} /></button>
      </div>
      <nav className="flex h-10 items-center text-[11px] whitespace-nowrap">
        <button aria-label="Apps" className="ml-[18px]">
          <svg width="15" height="15" viewBox="0 0 15 15" fill="none" stroke="currentColor" strokeWidth="1.500"><path d="M1 1h5v5H1zM9 1h5v5H9zM1 9h5v5H1zM9 9h5v5H9z" /></svg>
        </button>
        <span className="ml-[15px] h-4 w-px bg-[#5f3a48]" />
        <div className="ml-[14px] flex gap-[19px]">
          {bookmarks.map((b, i) => (
            <a key={i} href="#bookmark" className="flex items-center gap-[7px]">{b.icon}{b.name}</a>
          ))}
        </div>
        <button aria-label="More bookmarks" className="ml-auto"><ChevronsRight size={15} /></button>
        <span className="mr-4 ml-4 h-4 w-px bg-[#7c2733]" />
        <a href="#all" className="mr-[14px] flex items-center gap-2"><Folder size={16} className="text-[#84403f]" />All Bookmarks</a>
      </nav>
    </div>

    <main className="flex flex-1 justify-center pt-[344px]">
      <svg role="img" aria-label="Loading" width="50" height="50" viewBox="0 0 50 50" fill="#5fae5f">
        <circle cx="33" cy="3" r="2.500" /><circle cx="3" cy="17" r="2.500" /><circle cx="47" cy="33" r="2.500" /><circle cx="17" cy="47" r="2.500" />
      </svg>
    </main>

    <footer className="flex h-10 items-center bg-linear-to-r from-[#e6dcc8] via-[#d8d7d0] to-[#e6dfbf]">
      <button aria-label="Start" className="flex w-12 justify-center"><WindowsLogo /></button>
      <label className="flex h-full w-[343px] items-center gap-3 border border-[#c5c5c5] bg-white pl-[10px]">
        <Search size={17} strokeWidth={1.500} className="-scale-x-100" />
        <input aria-label="Search" placeholder="Type here to search" className="flex-1 text-[14px] outline-none placeholder:text-[#333]" />
      </label>
      <div className="ml-[3px] h-full"><TaskApps /></div>
      <div className="ml-auto flex items-center text-[13px] text-[#222]">
        <svg width="24" height="24" viewBox="0 0 24 24"><path d="M2 16h18c-1 5-4 7-9 7s-8-2-9-7zM5 12h15v2H5z" fill="#f2a53a" /><circle cx="18" cy="6" r="6" fill="#c42b1c" /><path d="M18 3v4M18 8v1" stroke="#fff" strokeWidth="1.500" /></svg>
        <span className="ml-2">29°C</span>
        <span className="ml-2">Haze</span>
        <ChevronUp size={16} strokeWidth={1.500} className="ml-[14px]" />
        <svg className="ml-2" width="18" height="12" viewBox="0 0 18 12"><path d="M4 12a4 4 0 0 1 0-7 5 5 0 0 1 9-1 4 4 0 0 1 1 8z" fill="#1c84d8" /></svg>
        <svg className="ml-2" width="17" height="16" viewBox="0 0 17 16" fill="none" stroke="#222"><path d="M1 3l10-2 4 2v10H1zM5 10c-2-3 2-6 4-3M10 7c1 3-3 5-5 3" /><circle cx="13" cy="12" r="3.500" fill="#e11d2a" stroke="none" /></svg>
        <svg className="ml-2" width="17" height="15" viewBox="0 0 17 15" fill="none" stroke="#222"><path d="M5 2.500h11v8H5M10 10.500v3M6 13.500h8M1 1.500h4v5H1zM3 6.500v7h3" /></svg>
        <svg className="ml-2" width="16" height="14" viewBox="0 0 16 14" fill="none" stroke="#222"><path d="M1 5h2l4-4v12L3 9H1zM10 5l5 5M15 5l-5 5" /></svg>
        <span className="mr-3 ml-3"><PenIcon /></span>
        <Clock />
        <svg className="ml-4" width="18" height="18" viewBox="0 0 18 18"><path d="M0 1h17v13h-5l-3 3v-3H0z" fill="#000" /><path d="M3 4.500h11M3 7.500h11M3 10.500h6" stroke="#fff" /><circle cx="13" cy="13" r="4" fill="#000" stroke="#e6dfbf" /></svg>
        <span className="mr-[3px] ml-5 h-10 w-px bg-[#bdb9a8]" />
      </div>
    </footer>
  </section>
);

const App: React.FC = () => (
  <div className="grid min-h-screen grid-cols-[1366fr_1440fr] bg-white">
    <ExcelDesktop />
    <ChromeDesktop />
  </div>
);

export default App;
